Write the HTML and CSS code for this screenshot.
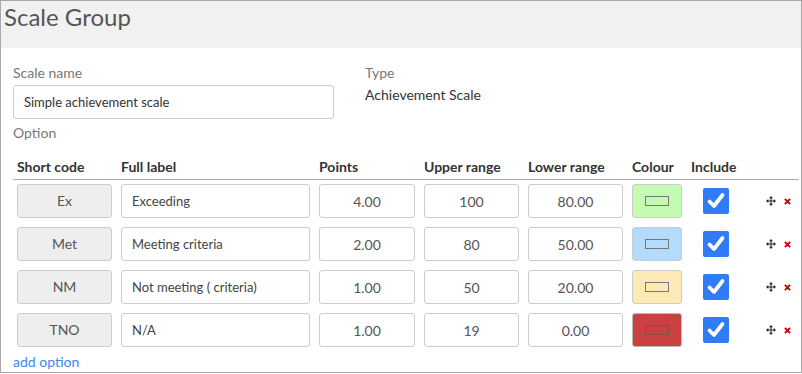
FILE: index.html
```html
<!DOCTYPE html>
<html lang="en">
<head>
  <meta charset="UTF-8">
  <meta name="viewport" content="width=device-width, initial-scale=1">
  <title>Scale Group</title>
  <link rel="stylesheet" href="styles.css">
</head>
<body>
  <div class="panel">
    <header class="panel-head">
      <h1>Scale Group</h1>
    </header>

    <div class="panel-body">
      <!-- name + type -->
      <div class="meta">
        <div class="meta-name">
          <label class="field-label" for="scaleName">Scale name</label>
          <input id="scaleName" class="text-input" type="text" value="Simple achievement scale">
        </div>
        <div class="meta-type">
          <div class="field-label">Type</div>
          <div class="type-value">Achievement Scale</div>
        </div>
      </div>
      <div class="field-label option-label">Option</div>

      <!-- options table -->
      <div class="options">
        <div class="opt-row opt-head">
          <div>Short code</div>
          <div>Full label</div>
          <div>Points</div>
          <div>Upper range</div>
          <div>Lower range</div>
          <div>Colour</div>
          <div>Include</div>
          <div></div>
        </div>

        <div class="opt-row">
          <div class="code-box">Ex</div>
          <input class="text-input label-input" type="text" value="Exceeding">
          <input class="text-input num-input" type="text" value="4.00">
          <input class="text-input num-input" type="text" value="100">
          <input class="text-input num-input" type="text" value="80.00">
          <div class="swatch green"><span></span></div>
          <div class="include"><span class="check"><svg viewBox="0 0 26 26"><path d="M6.5 13.5 L11 18 L19.5 7" /></svg></span></div>
          <div class="actions">
            <svg class="move" viewBox="0 0 10 10"><path d="M5 0 L7 2.3 H5.5 V4.5 H7.7 V3 L10 5 L7.7 7 V5.5 H5.5 V7.7 H7 L5 10 L3 7.7 H4.5 V5.5 H2.3 V7 L0 5 L2.3 3 V4.5 H4.5 V2.3 H3 Z" /></svg>
            <svg class="remove" viewBox="0 0 8 8"><path d="M1 1 L7 7 M7 1 L1 7" /></svg>
          </div>
        </div>

        <div class="opt-row">
          <div class="code-box">Met</div>
          <input class="text-input label-input" type="text" value="Meeting criteria">
          <input class="text-input num-input" type="text" value="2.00">
          <input class="text-input num-input" type="text" value="80">
          <input class="text-input num-input" type="text" value="50.00">
          <div class="swatch blue"><span></span></div>
          <div class="include"><span class="check"><svg viewBox="0 0 26 26"><path d="M6.5 13.5 L11 18 L19.5 7" /></svg></span></div>
          <div class="actions">
            <svg class="move" viewBox="0 0 10 10"><path d="M5 0 L7 2.3 H5.5 V4.5 H7.7 V3 L10 5 L7.7 7 V5.5 H5.5 V7.7 H7 L5 10 L3 7.7 H4.5 V5.5 H2.3 V7 L0 5 L2.3 3 V4.5 H4.5 V2.3 H3 Z" /></svg>
            <svg class="remove" viewBox="0 0 8 8"><path d="M1 1 L7 7 M7 1 L1 7" /></svg>
          </div>
        </div>

        <div class="opt-row">
          <div class="code-box">NM</div>
          <input class="text-input label-input" type="text" value="Not meeting ( criteria)">
          <input class="text-input num-input" type="text" value="1.00">
          <input class="text-input num-input" type="text" value="50">
          <input class="text-input num-input" type="text" value="20.00">
          <div class="swatch yellow"><span></span></div>
          <div class="include"><span class="check"><svg viewBox="0 0 26 26"><path d="M6.5 13.5 L11 18 L19.5 7" /></svg></span></div>
          <div class="actions">
            <svg class="move" viewBox="0 0 10 10"><path d="M5 0 L7 2.3 H5.5 V4.5 H7.7 V3 L10 5 L7.7 7 V5.5 H5.5 V7.7 H7 L5 10 L3 7.7 H4.5 V5.5 H2.3 V7 L0 5 L2.3 3 V4.5 H4.5 V2.3 H3 Z" /></svg>
            <svg class="remove" viewBox="0 0 8 8"><path d="M1 1 L7 7 M7 1 L1 7" /></svg>
          </div>
        </div>

        <div class="opt-row">
          <div class="code-box">TNO</div>
          <input class="text-input label-input" type="text" value="N/A">
          <input class="text-input num-input" type="text" value="1.00">
          <input class="text-input num-input" type="text" value="19">
          <input class="text-input num-input" type="text" value="0.00">
          <div class="swatch red"><span></span></div>
          <div class="include"><span class="check"><svg viewBox="0 0 26 26"><path d="M6.5 13.5 L11 18 L19.5 7" /></svg></span></div>
          <div class="actions">
            <svg class="move" viewBox="0 0 10 10"><path d="M5 0 L7 2.3 H5.5 V4.5 H7.7 V3 L10 5 L7.7 7 V5.5 H5.5 V7.7 H7 L5 10 L3 7.7 H4.5 V5.5 H2.3 V7 L0 5 L2.3 3 V4.5 H4.5 V2.3 H3 Z" /></svg>
            <svg class="remove" viewBox="0 0 8 8"><path d="M1 1 L7 7 M7 1 L1 7" /></svg>
          </div>
        </div>
      </div>

      <a class="add-link" href="#">add option</a>
    </div>
  </div>
</body>
</html>
```

FILE: styles.css
```css
body { margin: 0; padding: 0; background: #fff; font-family: Lato, "Open Sans", sans-serif; color: #333; }

.panel { box-sizing: border-box; width: 802px; height: 373px; border: 1px solid #a8a8a8; background: #fff; }
.panel-head { height: 47px; background: #f1f1f1; padding: 2px 0 0 3px; box-sizing: border-box; }
.panel-head h1 { margin: 0; font-size: 24px; line-height: 28px; font-weight: normal; color: #555; }

.panel-body { padding: 17px 2px 0 12px; }

.meta { display: flex; }
.meta-name { width: 321px; }
.meta-type { margin-left: 31px; }
.field-label { display: block; font-size: 14px; line-height: 16px; color: #777; }
.meta-name .field-label { margin-bottom: 4px; }
.type-value { margin-top: 6px; font-size: 14px; line-height: 16px; color: #333; }
.option-label { margin-top: 6px; }

.text-input { box-sizing: border-box; width: 100%; height: 34px; margin: 0; padding: 0 10px; border: 1px solid #ccc; border-radius: 3px; background: #fff; font-family: Lato, "Open Sans", sans-serif; font-size: 13px; color: #333; outline: none; }

.options { margin-top: 18px; }
.opt-row { display: grid; grid-template-columns: 95px 189px 96px 95px 95px 50px 50px 1fr; column-gap: 9px; align-items: center; padding-left: 4px; margin-top: 9px; }
.opt-head { margin-top: 0; padding-bottom: 4px; border-bottom: 1px solid #aaa; font-size: 14px; line-height: 16px; font-weight: bold; color: #333; }
.opt-head + .opt-row { margin-top: 4px; }

.code-box { box-sizing: border-box; height: 34px; line-height: 32px; border: 1px solid #ccc; border-radius: 3px; background: #eee; text-align: center; font-size: 14px; color: #555; }
.num-input { text-align: center; font-size: 14px; color: #555; }
.label-input { color: #444; }

.swatch { box-sizing: border-box; height: 34px; border: 1px solid #ccc; border-radius: 3px; display: flex; align-items: center; justify-content: center; }
.swatch span { width: 22px; height: 8px; border: 1px solid #777; }
.swatch.green { background: #c3fcb1; }
.swatch.blue { background: #b3dbfd; }
.swatch.yellow { background: #fde8b7; }
.swatch.red { background: #c94141; border-color: #bbb; }
.swatch.red span { border-color: #8a4a4a; }

.include { display: flex; justify-content: center; }
.check { display: block; width: 26px; height: 26px; border-radius: 2px; background: #2f7cf6; }
.check svg { display: block; width: 26px; height: 26px; }
.check path { fill: none; stroke: #fff; stroke-width: 3.8; stroke-linecap: round; stroke-linejoin: round; }

.actions { display: flex; align-items: center; padding-left: 16px; gap: 8px; }
.move { width: 10px; height: 10px; fill: #222; }
.remove { width: 7px; height: 7px; }
.remove path { stroke: #c00; stroke-width: 2.2; }

.add-link { display: inline-block; margin-top: 7px; font-size: 14px; line-height: 16px; color: #3d88e8; text-decoration: none; }
```
